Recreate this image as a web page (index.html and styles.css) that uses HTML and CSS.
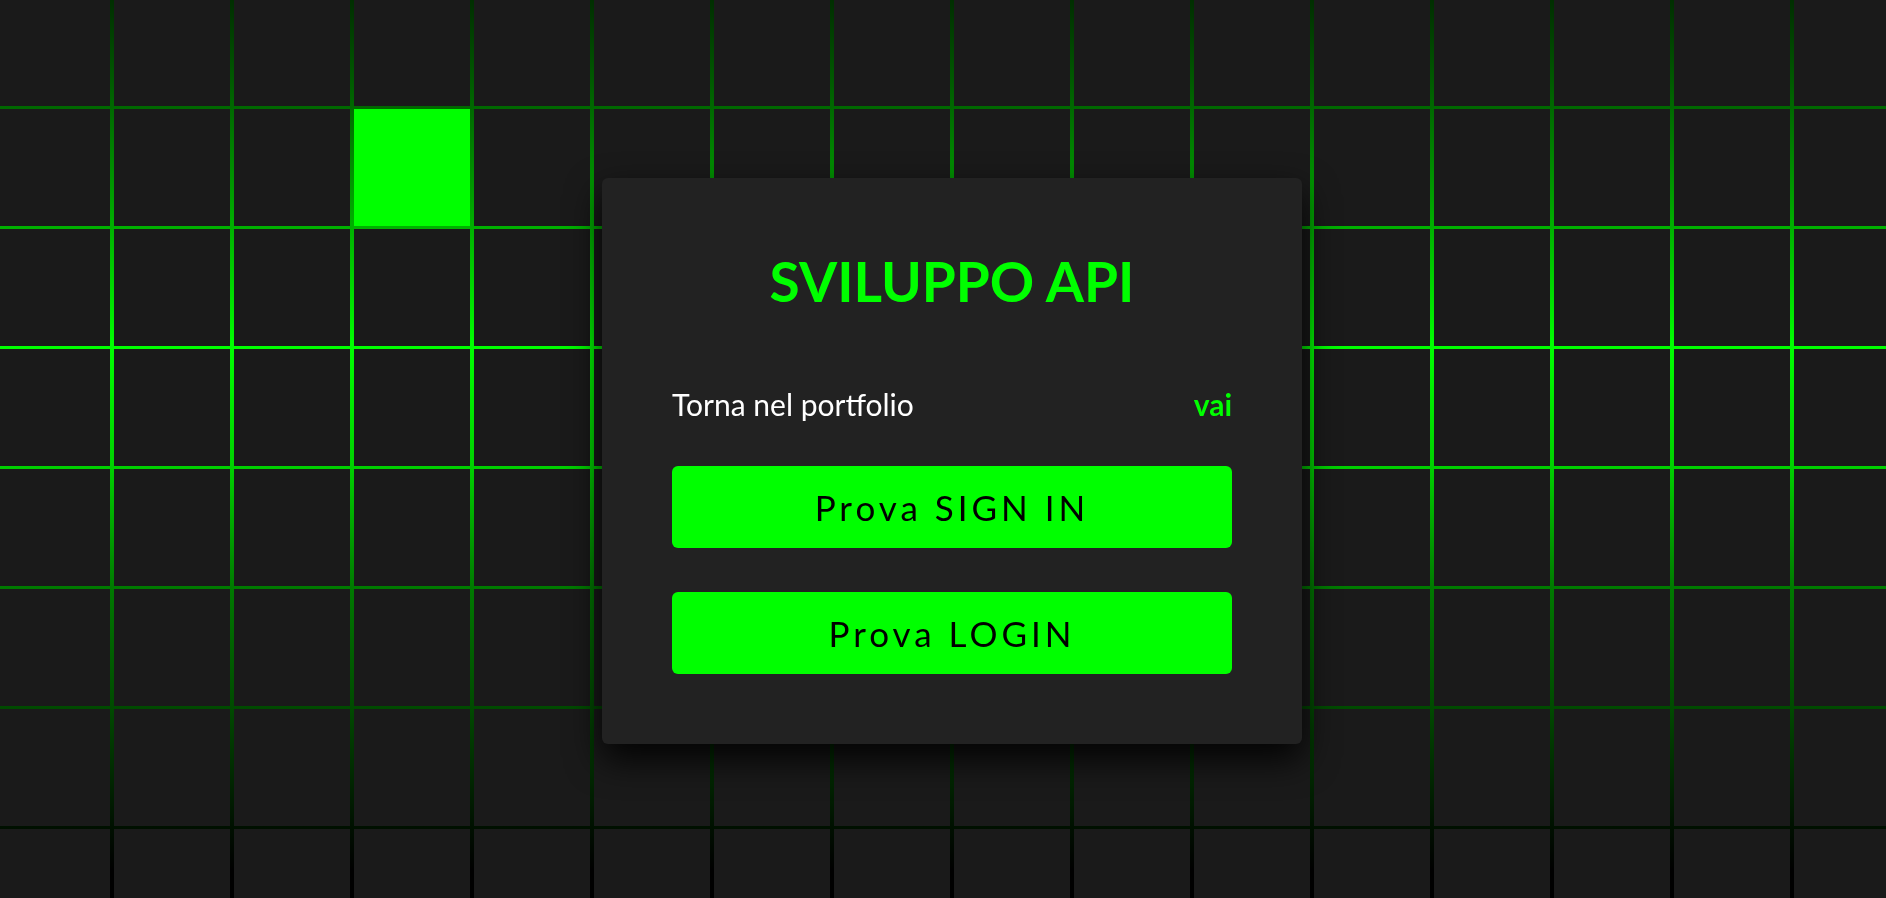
FILE: index.html
```html
<!DOCTYPE html>
<html lang="it">
<head>
<meta charset="utf-8">
<title>Sviluppo API</title>
<link rel="stylesheet" href="styles.css">
</head>
<body>
<div class="bg">
  <div class="grid">
    <span></span><span></span><span></span><span></span><span></span><span></span><span></span><span></span><span></span><span></span><span></span><span></span><span></span><span></span><span></span><span></span>
    <span></span><span></span><span></span><span class="on"></span><span></span><span></span><span></span><span></span><span></span><span></span><span></span><span></span><span></span><span></span><span></span><span></span>
    <span></span><span></span><span></span><span></span><span></span><span></span><span></span><span></span><span></span><span></span><span></span><span></span><span></span><span></span><span></span><span></span>
    <span></span><span></span><span></span><span></span><span></span><span></span><span></span><span></span><span></span><span></span><span></span><span></span><span></span><span></span><span></span><span></span>
    <span></span><span></span><span></span><span></span><span></span><span></span><span></span><span></span><span></span><span></span><span></span><span></span><span></span><span></span><span></span><span></span>
    <span></span><span></span><span></span><span></span><span></span><span></span><span></span><span></span><span></span><span></span><span></span><span></span><span></span><span></span><span></span><span></span>
    <span></span><span></span><span></span><span></span><span></span><span></span><span></span><span></span><span></span><span></span><span></span><span></span><span></span><span></span><span></span><span></span>
    <span></span><span></span><span></span><span></span><span></span><span></span><span></span><span></span><span></span><span></span><span></span><span></span><span></span><span></span><span></span><span></span>
  </div>
</div>
<main class="stage">
  <div class="card">
    <h1 class="title">SVILUPPO API</h1>
    <div class="row">
      <span class="row-label">Torna nel portfolio</span>
      <a class="row-link" href="#">vai</a>
    </div>
    <div class="actions">
      <button class="btn" type="button">Prova SIGN IN</button>
      <button class="btn" type="button">Prova LOGIN</button>
    </div>
  </div>
</main>
</body>
</html>
```

FILE: styles.css
```css
* {
  box-sizing: border-box;
}

html, body {
  margin: 0;
  padding: 0;
}

body {
  background: #000;
  font-family: "Lato", "Noto Sans", sans-serif;
  overflow: hidden;
}

.bg {
  position: fixed;
  inset: 0;
  overflow: hidden;
  background: linear-gradient(to bottom,
    #002e00 0px,
    #006800 107px,
    #00b000 227px,
    #00ff00 347px,
    #00d000 467px,
    #007a00 587px,
    #004a00 707px,
    #001000 827px,
    #000000 870px);
}

.grid {
  display: grid;
  grid-template-columns: repeat(16, 116px);
  grid-auto-rows: 117px;
  gap: 3px 4px;
  margin: -11px 0 0 -6px;
}

.grid span {
  display: block;
  background: #1a1a1a;
}

.grid span.on {
  background: #00ff00;
}

.stage {
  position: relative;
  z-index: 1;
  height: 100vh;
  padding: 24px 0 0 18px;
  display: flex;
  align-items: center;
  justify-content: center;
}

.card {
  width: 700px;
  padding: 70px;
  background: #222;
  border-radius: 6px;
  box-shadow: 0 15px 35px rgba(0, 0, 0, 0.9);
}

.title {
  margin: 0 0 71px;
  font-size: 55px;
  line-height: 67px;
  font-weight: 700;
  color: #00ff00;
  text-align: center;
}

.row {
  display: flex;
  justify-content: space-between;
  align-items: baseline;
  font-size: 30px;
  line-height: 36px;
  margin-bottom: 44px;
}

.row-label {
  color: #fff;
}

.row-link {
  color: #00ff00;
  font-weight: 700;
  text-decoration: none;
}

.actions {
  display: flex;
  flex-direction: column;
  gap: 44px;
}

.btn {
  display: block;
  width: 100%;
  height: 82px;
  border: none;
  border-radius: 6px;
  background: #00ff00;
  color: #000;
  font-family: "Lato", "Noto Sans", sans-serif;
  font-size: 35px;
  letter-spacing: 4px;
  padding: 0;
  cursor: pointer;
}
```
